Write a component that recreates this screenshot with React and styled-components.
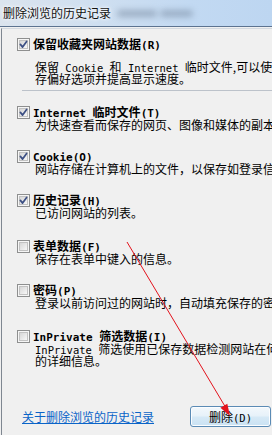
import React, { useId } from 'react';
import styled, { createGlobalStyle } from 'styled-components';

const GlobalStyle = createGlobalStyle`
    html, body {
        margin: 0;
        padding: 0;
        background: #f0f0f0;
    }
    body {
        font-family: "Noto Sans CJK SC", "Liberation Sans", sans-serif;
        color: #000;
    }
`;

const Window = styled.div`
    position: relative;
    width: 272px;
    height: 435px;
    display: flex;
    flex-direction: column;
    background: #f0f0f0;
    overflow: hidden;
`;

const TitleBar = styled.div`
    height: 26px;
    display: flex;
    align-items: center;
    padding-left: 3px;
    background: linear-gradient(to right, #dbe4ee 0%, #cfdff0 35%, #c2d9f2 70%, #bdd6f1 100%);
    border-bottom: 1px solid #5c7390;
`;

const Title = styled.span`
    font-size: 12px;
    line-height: 14px;
    color: #111;
    white-space: nowrap;
    text-shadow: 0 0 5px #fff, 0 0 3px #fff;
`;

const GlassBlob = styled.span`
    display: inline-block;
    width: ${p => p.$w}px;
    height: 7px;
    margin-left: ${p => p.$ml}px;
    border-radius: 4px;
    background: #6f8198;
    opacity: 0.5;
    filter: blur(3px);
`;

const Frame = styled.div`
    flex: 1;
    display: flex;
    flex-direction: column;
    margin: 1px 0 0 1px;
    padding: 8px 0 0 15px;
    border-left: 1px solid #7f8791;
    border-top: 1px solid #d3d9e0;
    overflow: hidden;
`;

const Item = styled.div`
    margin-top: ${p => p.$top || 0}px;
`;

const TitleRow = styled.div`
    display: flex;
    align-items: center;
    gap: 3px;
    height: 14px;
`;

const Label = styled.span`
    font-family: "Noto Sans CJK SC", sans-serif;
    font-size: 12px;
    font-weight: bold;
    line-height: 14px;
    white-space: nowrap;
`;

const Desc = styled.div`
    margin-top: ${p => p.$top || 0}px;
    padding-left: 18px;
`;

const DescLine = styled.div`
    font-family: "Noto Sans CJK SC", sans-serif;
    font-size: 12px;
    line-height: 11.5px;
    white-space: nowrap;
`;

// latin runs are narrower in the original dialog font
const Latin = styled.span`
    font-family: "DejaVu Sans Mono", "Liberation Mono", monospace;
    font-size: ${p => p.$size}px;
    line-height: 0;
`;

const Separator = styled.div`
    height: 1px;
    margin: 6px 0 0 5px;
    background: #bcc2ca;
`;

const Footer = styled.div`
    margin-top: auto;
    display: flex;
    align-items: center;
    justify-content: space-between;
    padding: 0 1px 8px 5px;
`;

const HelpLink = styled.a`
    font-size: 12px;
    line-height: 14px;
    color: #0a64c8;
    text-decoration: underline;
    cursor: pointer;
`;

const DeleteButton = styled.button`
    width: 81px;
    height: 21px;
    padding: 0;
    border: 1px solid #5b8bb5;
    border-radius: 3px;
    background: linear-gradient(#f3f8fc 0%, #e6f1f9 48%, #d6e9f6 52%, #cae2f3 100%);
    box-shadow: inset 0 0 0 1px #fbfdff;
    font-family: "Noto Sans CJK SC", sans-serif;
    font-size: 12px;
    line-height: 18px;
    color: #000;
    cursor: pointer;
`;

const Annotation = styled.svg`
    position: absolute;
    left: 0;
    top: 0;
    pointer-events: none;
`;

const mixed = (text, size) =>
    text.split(/([A-Za-z() ]*[A-Za-z()][A-Za-z() ]*)/).map((part, i) =>
        i % 2 ? <Latin key={i} $size={size}>{part}</Latin> : part
    );

const Checkbox = ({ checked }) => {
    const id = useId().replace(/:/g, '');
    return (
        <svg width="13" height="13" viewBox="0 0 13 13">
            <defs>
                <linearGradient id={`g${id}`} x1="0" y1="0" x2="1" y2="1">
                    <stop offset="0" stopColor="#d4d4d4" />
                    <stop offset="1" stopColor="#fafafa" />
                </linearGradient>
            </defs>
            <rect x="0.5" y="0.5" width="12" height="12" fill="#f6f6f6" stroke="#8e8f8f" />
            <rect x="2.5" y="2.5" width="8" height="8" fill={`url(#g${id})`} stroke="#c2c2c2" />
            {checked && (
                <path d="M3.4 6.4 L5.6 9.1 L9.6 3.4" fill="none" stroke="#3d5084" strokeWidth="1.7" strokeLinecap="round" strokeLinejoin="round" />
            )}
        </svg>
    );
};

const items = [
    {
        label: '保留收藏夹网站数据(R)',
        checked: true,
        descTop: 10,
        lines: ['保留 Cookie 和 Internet 临时文件,可以使收藏夹网站保', '存偏好选项并提高显示速度。'],
    },
    { label: 'Internet 临时文件(T)', checked: true, top: 14, lines: ['为快速查看而保存的网页、图像和媒体的副本。'] },
    { label: 'Cookie(O)', checked: true, top: 18.5, lines: ['网站存储在计算机上的文件，以保存如登录信息等首选项。'] },
    { label: '历史记录(H)', checked: true, top: 18.5, lines: ['已访问网站的列表。'] },
    { label: '表单数据(F)', checked: false, top: 20.5, lines: ['保存在表单中键入的信息。'] },
    { label: '密码(P)', checked: false, top: 18.5, lines: ['登录以前访问过的网站时，自动填充保存的密码。'] },
    {
        label: 'InPrivate 筛选数据(I)',
        checked: false,
        top: 20.5,
        lines: ['InPrivate 筛选使用已保存数据检测网站在何处自动共享您访问', '的详细信息。'],
    },
];

export default function App() {
    return (
        <>
            <GlobalStyle />
            <Window>
                <TitleBar>
                    <Title>删除浏览的历史记录</Title>
                    <GlassBlob $ml={6} $w={40} />
                    <GlassBlob $ml={3} $w={33} />
                </TitleBar>
                <Frame>
                    {items.map((it, i) => (
                        <React.Fragment key={i}>
                            <Item $top={it.top}>
                                <TitleRow>
                                    <Checkbox checked={it.checked} />
                                    <Label>{mixed(it.label, 11)}</Label>
                                </TitleRow>
                                <Desc $top={it.descTop}>
                                    {it.lines.map((l, j) => (
                                        <DescLine key={j}>{mixed(l, 10.5)}</DescLine>
                                    ))}
                                </Desc>
                            </Item>
                            {i === 0 && <Separator />}
                        </React.Fragment>
                    ))}
                    <Footer>
                        <HelpLink>关于删除浏览的历史记录</HelpLink>
                        <DeleteButton>{mixed('删除(D)', 10.5)}</DeleteButton>
                    </Footer>
                </Frame>
                <Annotation width="272" height="435" viewBox="0 0 272 435">
                    <line x1="127" y1="242" x2="226" y2="408" stroke="#e3121c" strokeWidth="1" />
                    <polygon points="230,416 220.4,407.7 227.3,403.7" fill="#e3121c" />
                </Annotation>
            </Window>
        </>
    );
}
